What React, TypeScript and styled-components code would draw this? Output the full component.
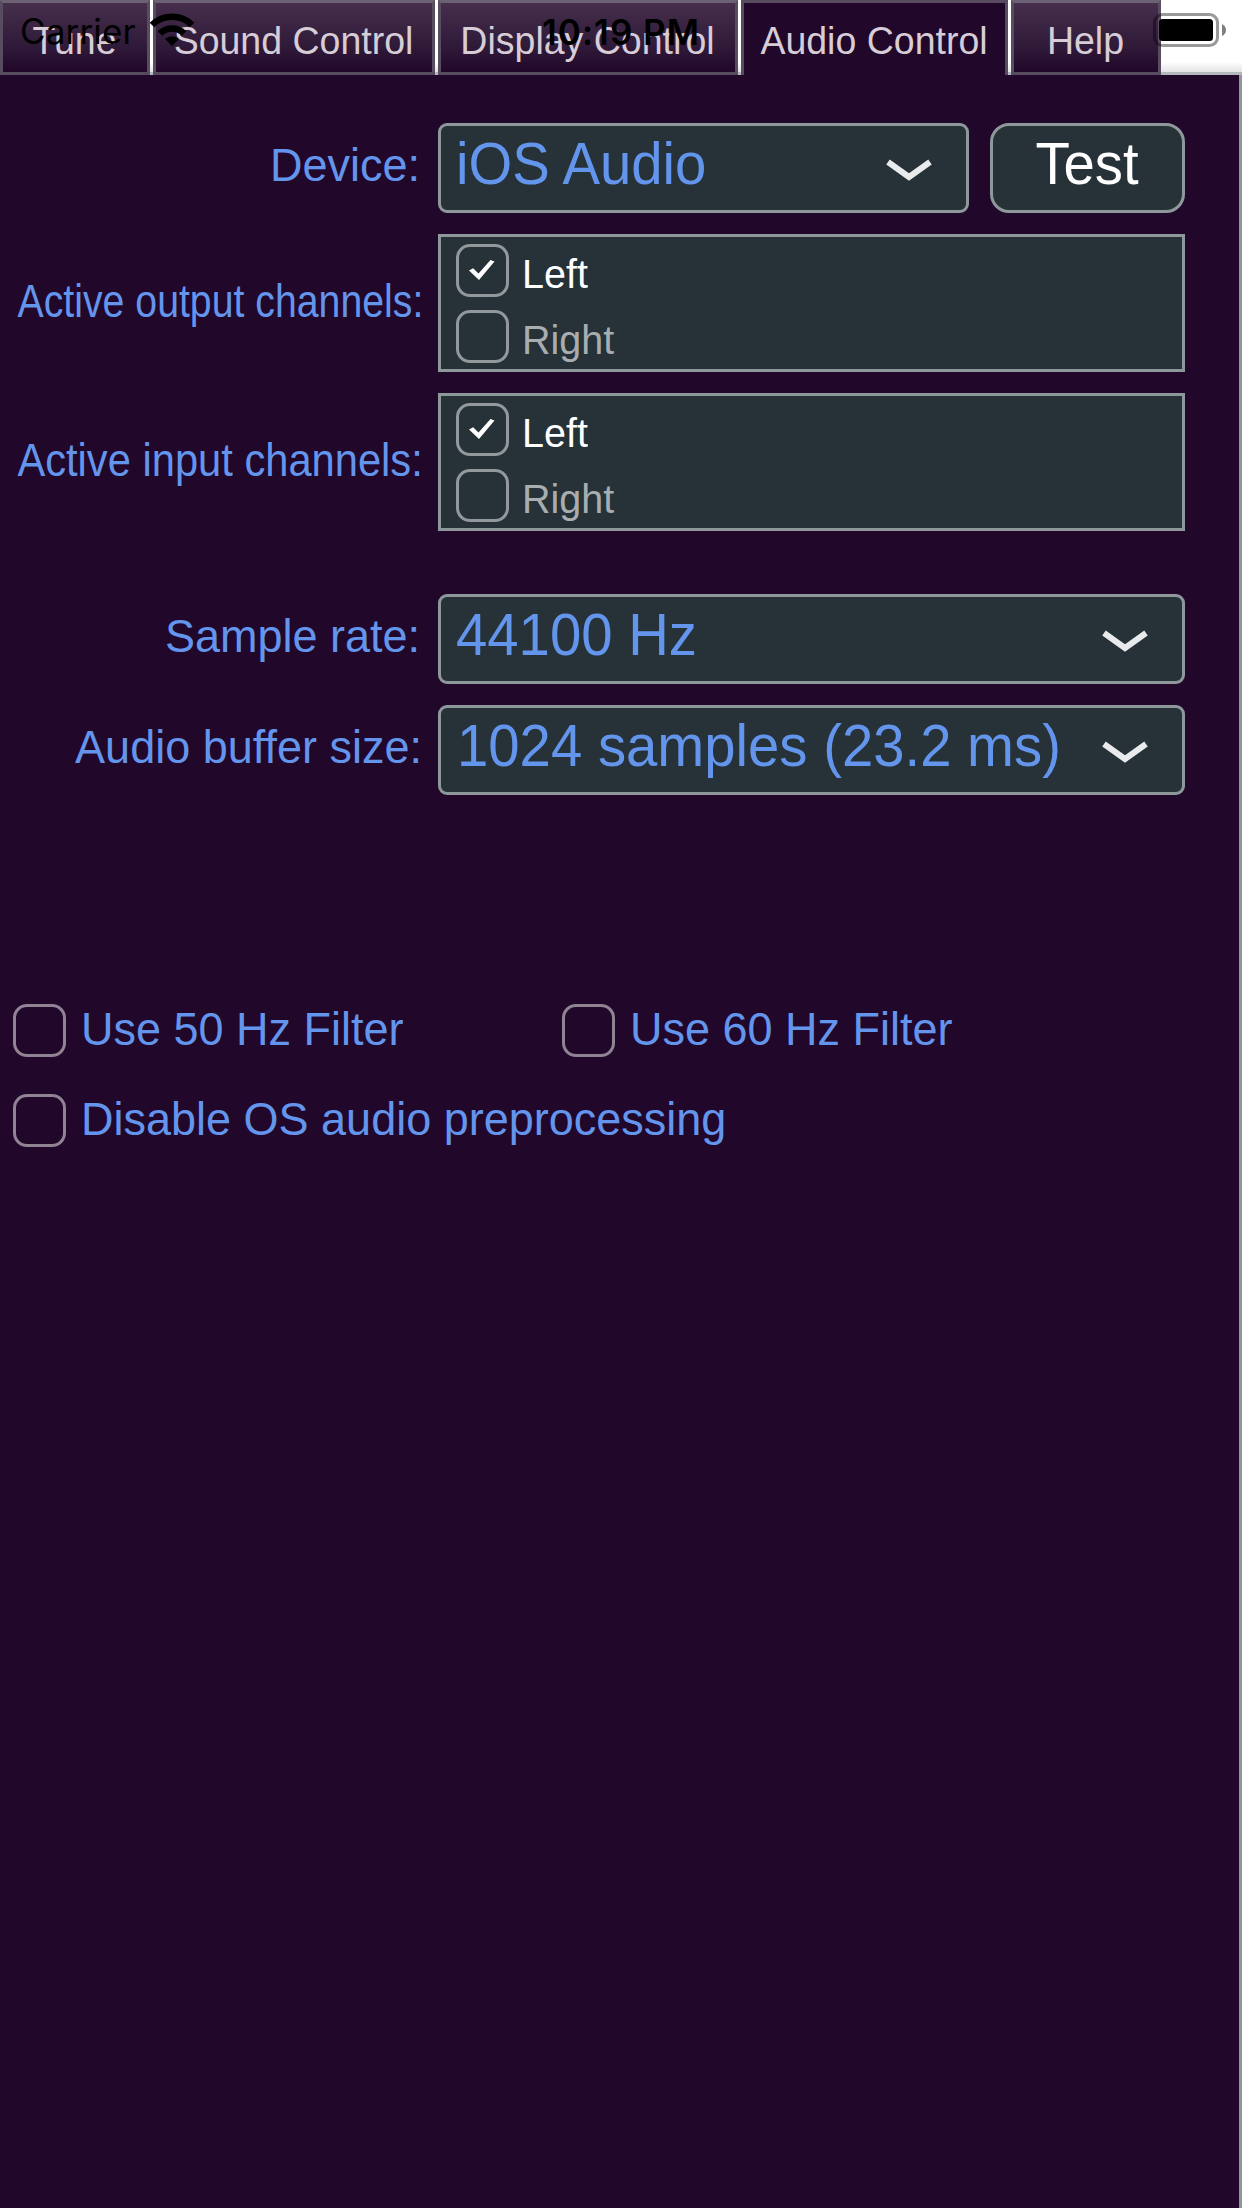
import React from "react";
import styled, { createGlobalStyle } from "styled-components";

const GlobalStyle = createGlobalStyle`
  html, body { margin: 0; background: #fff; }
  *, *::before, *::after { box-sizing: border-box; }
`;

const sans = `"Liberation Sans", Arial, sans-serif`;
const outline = "#8e989b";
const panel = "#263238";
const purple = "#21072a";

const Screen = styled.div`
  position: relative;
  display: flex;
  flex-direction: column;
  width: 1242px;
  height: 2208px;
  overflow: hidden;
  background: #fff;
  font-family: ${sans};
`;

const TabBar = styled.nav`
  display: flex;
  gap: 3px;
  height: 75px;
  flex: none;
  background: linear-gradient(#0000 62px, #0000001c 72px, #b3b9bd 72px);
`;

const Tab = styled.div<{ $width: number; $active?: boolean }>`
  display: flex;
  justify-content: center;
  width: ${(p) => p.$width}px;
  height: 75px;
  padding-right: 1px;
  border: 3px solid #584c60;
  border-top-color: ${(p) => (p.$active ? "#594c60" : "#6c6273")};
  border-bottom-color: ${(p) => (p.$active ? purple : "#574b5f")};
  ${(p) => p.$active && "border-bottom-width: 0;"}
  background: ${(p) => (p.$active ? purple : `linear-gradient(#452f4c, #311b3a 60%, ${purple})`)};
`;

const Text = styled.span<{ $size: number; $squeeze?: number; $origin?: string }>`
  display: block;
  flex: none;
  white-space: pre;
  font-size: ${(p) => p.$size}px;
  line-height: 1.2;
  transform: scale(${(p) => p.$squeeze ?? 1}, 1.04);
  transform-origin: ${(p) => p.$origin ?? "left"} 80%;
`;

const TabText = styled(Text)`
  margin-top: 16px;
  color: #d6cdd7;
`;

const Page = styled.main`
  display: flex;
  flex-direction: column;
  flex: 1;
  padding-top: 48px;
  border-right: 3px solid ${outline};
  background: ${purple};
`;

const Row = styled.section<{ $height: number; $gap: number }>`
  display: flex;
  height: ${(p) => p.$height}px;
  margin-bottom: ${(p) => p.$gap}px;
`;

const Label = styled.div<{ $inset: number; $lift?: number }>`
  display: flex;
  flex: none;
  justify-content: flex-end;
  align-items: center;
  width: 438px;
  padding: 0 ${(p) => p.$inset}px ${(p) => p.$lift ?? 4}px 0;
  color: #6495ed;
`;

const Combo = styled.div<{ $width: number; $indent: number }>`
  display: flex;
  justify-content: space-between;
  width: ${(p) => p.$width}px;
  padding: 5px 34px 0 ${(p) => p.$indent}px;
  border: 3px solid ${outline};
  border-radius: 9px;
  background: ${panel};
  color: #6495ed;
`;

const Chevron = styled.svg`
  flex: none;
  width: 46px;
  height: 22px;
  margin-top: 28px;
`;

const TestButton = styled.button`
  display: flex;
  justify-content: center;
  width: 195px;
  margin-left: 21px;
  padding: 5px 1px 0 0;
  border: 3px solid ${outline};
  border-radius: 19px;
  background: ${panel};
  color: #fff;
  font-family: ${sans};
`;

const ChannelList = styled.div`
  display: flex;
  flex-direction: column;
  width: 747px;
  padding: 7px 0 0 15px;
  border: 3px solid ${outline};
  background: ${panel};
`;

const Channel = styled.div<{ $on?: boolean }>`
  display: flex;
  flex: none;
  gap: 13px;
  height: 66px;
  color: ${(p) => (p.$on ? "#fff" : "#a8adaf")};
`;

const Box = styled.span<{ $color: string }>`
  display: flex;
  flex: none;
  justify-content: center;
  width: 53px;
  height: 53px;
  border: 3px solid ${(p) => p.$color};
  border-radius: 14px;
`;

const Tick = styled.svg`
  width: 26px;
  height: 20px;
  margin: 13px 1px 0 0;
`;

const ChannelText = styled(Text)`
  margin-top: 7px;
`;

const Toggles = styled.section`
  display: grid;
  grid-template-columns: 549px 1fr;
  grid-auto-rows: 90px;
  padding: 0 0 0 13px;
  margin-top: 159px;
`;

const Toggle = styled.div<{ $wide?: boolean }>`
  display: flex;
  gap: 15px;
  color: #6495ed;
  ${(p) => p.$wide && "grid-column: 1 / -1;"}
`;

const StatusBar = styled.div`
  position: absolute;
  inset: 0 0 auto 0;
  height: 60px;
  color: #000;
  font-family: Inter, sans-serif;
  font-size: 35px;
  line-height: 42px;
`;

const Carrier = styled.span`
  position: absolute;
  left: 20px;
  top: 10px;
  letter-spacing: 0.15px;
`;

const Clock = styled.span`
  position: absolute;
  left: 0;
  right: 0;
  top: 11px;
  text-align: center;
  font-weight: 600;
  letter-spacing: 1px;
`;

const Wifi = styled.svg`
  position: absolute;
  left: 149px;
  top: 12px;
`;

const Battery = styled.svg`
  position: absolute;
  left: 1152px;
  top: 12px;
`;

const tabs = [
  { name: "Tune", width: 150 },
  { name: "Sound Control", width: 282 },
  { name: "Display Control", width: 300 },
  { name: "Audio Control", width: 267, active: true },
  { name: "Help", width: 150 },
];

function Select({ value, width, indent = 15 }: { value: string; width: number; indent?: number }) {
  return (
    <Combo $width={width} $indent={indent}>
      <Text $size={56.3}>{value}</Text>
      <Chevron viewBox="0 0 46 22">
        <path d="M2 3 L23 18 L44 3" fill="none" stroke="#e9eaeb" strokeWidth="6" />
      </Chevron>
    </Combo>
  );
}

function Channels() {
  return (
    <ChannelList>
      <Channel $on>
        <Box $color="#92989b">
          <Tick viewBox="0 0 26 20">
            <path d="M0 10.5 L4.2 8.2 L9.5 13.5 L21.5 0 L25.5 1.5 L10 20 Z" fill="#fff" />
          </Tick>
        </Box>
        <ChannelText $size={39.5}>Left</ChannelText>
      </Channel>
      <Channel>
        <Box $color="#92989b" />
        <ChannelText $size={39.5}>Right</ChannelText>
      </Channel>
    </ChannelList>
  );
}

function Option({ text, wide }: { text: string; wide?: boolean }) {
  return (
    <Toggle $wide={wide}>
      <Box $color="#908394" />
      <Text $size={45}>{text}</Text>
    </Toggle>
  );
}

export default function App() {
  return (
    <Screen>
      <GlobalStyle />
      <TabBar>
        {tabs.map((t) => (
          <Tab key={t.name} $width={t.width} $active={t.active}>
            <TabText $size={37.5}>{t.name}</TabText>
          </Tab>
        ))}
      </TabBar>
      <Page>
        <Row $height={90} $gap={21}>
          <Label $inset={18}><Text $size={45}>Device:</Text></Label>
          <Select value="iOS Audio" width={531} />
          <TestButton><Text $size={56.3}>Test</Text></TestButton>
        </Row>
        <Row $height={138} $gap={21}>
          <Label $inset={15} $lift={2}><Text $size={45} $squeeze={0.872} $origin="right">Active output channels:</Text></Label>
          <Channels />
        </Row>
        <Row $height={138} $gap={63}>
          <Label $inset={15} $lift={2}><Text $size={45} $squeeze={0.926} $origin="right">Active input channels:</Text></Label>
          <Channels />
        </Row>
        <Row $height={90} $gap={21}>
          <Label $inset={18}><Text $size={45}>Sample rate:</Text></Label>
          <Select value="44100 Hz" width={747} />
        </Row>
        <Row $height={90} $gap={50}>
          <Label $inset={16}><Text $size={45}>Audio buffer size:</Text></Label>
          <Select value="1024 samples (23.2 ms)" width={747} indent={16} />
        </Row>
        <Toggles>
          <Option text="Use 50 Hz Filter" />
          <Option text="Use 60 Hz Filter" />
          <Option text="Disable OS audio preprocessing" wide />
        </Toggles>
      </Page>
      <StatusBar>
        <Carrier>Carrier</Carrier>
        <Clock>10:19 PM</Clock>
        <Wifi width="46" height="35" viewBox="0 0 46 35">
          <path d="M3 13 A28.5 28.5 0 0 1 43 13" fill="none" stroke="#000" strokeWidth="6.5" />
          <path d="M11 21.5 A17 17 0 0 1 35 21.5" fill="none" stroke="#000" strokeWidth="6.5" />
          <path d="M23 34 L16 27 A10 10 0 0 1 30 27 Z" />
        </Wifi>
        <Battery width="76" height="36" viewBox="0 0 76 36">
          <rect x="2.5" y="2.5" width="63" height="31" rx="8" fill="none" stroke="#000" strokeOpacity=".4" strokeWidth="3" />
          <rect x="7" y="7" width="54" height="22" rx="3.5" />
          <path d="M70 12 Q74 14 74 18 T70 24 Z" fillOpacity=".5" />
        </Battery>
      </StatusBar>
    </Screen>
  );
}
